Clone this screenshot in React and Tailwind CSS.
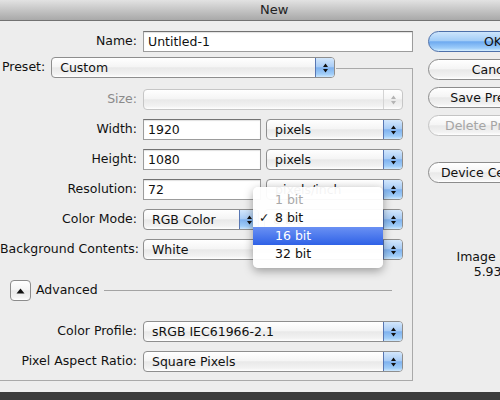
import React from "react";

// aqua control faces
const face =
  "bg-[linear-gradient(#ffffff,#f5f5f5_45%,#e9e9e9_52%,#f2f2f2_85%,#ffffff)]";
const blue =
  "bg-[linear-gradient(#d3e7fc,#aacdf6_45%,#7fb2ef_52%,#a0cdf8_85%,#cfe8fe)]";
const okBlue =
  "bg-[linear-gradient(#cde5fc,#a3cdf7_45%,#6eaaf0_52%,#9dcdfa_85%,#d6eeff)]";

function Arrows({ color = "#111" }) {
  return (
    <svg width="7" height="12" viewBox="0 0 7 12">
      <path d="M3.5 1.5 L6 5 L1 5 Z M1 7 L6 7 L3.5 10.5 Z" fill={color} />
    </svg>
  );
}

function Popup({ value, w, disabled }) {
  return (
    <div
      className={`flex h-[21px] ${w} shrink-0 overflow-hidden rounded-[4px] border ${
        disabled ? "border-[#c6c6c6]" : "border-[#8e8e8e]"
      } ${face}`}
    >
      <span className="flex-1 truncate pl-[8px] leading-[19px]">{value}</span>
      <span
        className={`flex w-[19px] items-center justify-center border-l ${
          disabled ? "border-[#d4d4d4]" : `border-[#5877b3] ${blue}`
        }`}
      >
        <Arrows color={disabled ? "#b4b4b4" : "#111"} />
      </span>
    </div>
  );
}

function Field({ value, w }) {
  return (
    <div
      className={`h-[21px] ${w} shrink-0 border border-[#9c9c9c] border-t-[#727272] bg-white pl-[4px] leading-[19px] shadow-[inset_0_1px_1px_rgba(0,0,0,0.12)]`}
    >
      {value}
    </div>
  );
}

function Row({ label, disabled, children }) {
  return (
    <div className="flex h-[21px] items-center">
      <span
        className={`w-[137px] shrink-0 whitespace-nowrap text-right ${
          disabled ? "text-[#8a8a8a]" : ""
        }`}
      >
        {label}
      </span>
      <div className="ml-[6px] flex gap-[5px]">{children}</div>
    </div>
  );
}

function AquaButton({ label, primary, disabled }) {
  const look = primary
    ? `border-[#4d70aa] ${okBlue}`
    : disabled
    ? `border-[#c4c4c4] text-[#a5a5a5] ${face}`
    : `border-[#8c8c8c] ${face}`;
  return (
    <div
      className={`h-[21px] w-[130px] shrink-0 whitespace-nowrap rounded-full border text-center leading-[19px] ${look}`}
    >
      {label}
    </div>
  );
}

const bits = [
  { label: "1 bit", disabled: true },
  { label: "8 bit", checked: true },
  { label: "16 bit", active: true },
  { label: "32 bit" },
];

export default function App() {
  return (
    <div className="relative flex h-[400px] w-[500px] flex-col overflow-hidden bg-[#ededed] font-['DejaVu_Sans',sans-serif] text-[12.5px] text-[#111]">
      {/* title bar */}
      <div className="h-[21px] shrink-0 border-b border-[#727272] bg-linear-to-b from-[#e2e2e2] to-[#a9a9a9] pl-[260px] text-[13px] leading-[20px] text-[#222]">
        New
      </div>

      {/* body */}
      <div className="flex flex-1 pt-[10px]">
        {/* left side */}
        <div className="w-[413px] shrink-0">
          <Row label="Name:">
            <Field value="Untitled-1" w="w-[270px]" />
          </Row>

          <div className="relative z-10 mt-[5px] flex w-fit items-center bg-[#ededed] pr-[1px]">
            <span className="pl-[2px]">Preset:</span>
            <div className="ml-[6px]">
              <Popup value="Custom" w="w-[284px]" />
            </div>
          </div>

          <div className="-mt-[10px] border-y border-r border-[#a9a9a9] pb-[8px] pt-[20px]">
            <div className="flex flex-col gap-[9px]">
              <Row label="Size:" disabled>
                <Popup value="" w="w-[260px]" disabled />
              </Row>
              <Row label="Width:">
                <Field value="1920" w="w-[118px]" />
                <Popup value="pixels" w="w-[137px]" />
              </Row>
              <Row label="Height:">
                <Field value="1080" w="w-[118px]" />
                <Popup value="pixels" w="w-[137px]" />
              </Row>
              <Row label="Resolution:">
                <Field value="72" w="w-[118px]" />
                <Popup value="pixels/inch" w="w-[137px]" />
              </Row>
              <Row label="Color Mode:">
                <Popup value="RGB Color" w="w-[116px]" />
                <Popup value="8 bit" w="w-[139px]" />
              </Row>
              <Row label="Background Contents:">
                <Popup value="White" w="w-[260px]" />
              </Row>
            </div>

            <div className="mt-[20px] flex h-[21px] items-center pl-[10px] pr-[20px]">
              <div
                className={`flex h-[21px] w-[21px] items-center justify-center rounded-[4px] border border-[#8c8c8c] ${face}`}
              >
                <svg width="9" height="6" viewBox="0 0 9 6">
                  <path d="M4.5 0.5 L8.5 5.5 L0.5 5.5 Z" fill="#111" />
                </svg>
              </div>
              <span className="ml-[5px]">Advanced</span>
              <div className="ml-[6px] h-px flex-1 bg-[#a3a3a3]" />
            </div>

            <div className="mt-[20px] flex flex-col gap-[9px]">
              <Row label="Color Profile:">
                <Popup value="sRGB IEC61966-2.1" w="w-[260px]" />
              </Row>
              <Row label="Pixel Aspect Ratio:">
                <Popup value="Square Pixels" w="w-[260px]" />
              </Row>
            </div>
          </div>
        </div>

        {/* right side */}
        <div className="ml-[15px] flex w-[130px] shrink-0 flex-col">
          <div className="flex flex-col gap-[7px]">
            <AquaButton label="OK" primary />
            <AquaButton label="Cancel" />
            <AquaButton label="Save Preset..." />
            <AquaButton label="Delete Preset..." disabled />
          </div>
          <div className="mt-[26px]">
            <AquaButton label="Device Central..." />
          </div>
          <div className="mt-[66px] text-center leading-[15px]">
            <div>Image Size:</div>
            <div>5.93M</div>
          </div>
        </div>
      </div>

      {/* dark strip below the sheet */}
      <div className="h-[8px] shrink-0 bg-[#3b3b3b]" />

      {/* open bit-depth menu */}
      <div className="absolute left-[253px] top-[187px] w-[130px] rounded-[5px] bg-white/95 pb-[5px] pt-[4px] shadow-[0_3px_10px_rgba(0,0,0,0.35)]">
        {bits.map((b) => (
          <div
            key={b.label}
            className={`flex h-[18px] items-center ${
              b.active
                ? "bg-linear-to-b from-[#6a90f3] to-[#2f61e6] text-white"
                : b.disabled
                ? "text-[#a8a8a8]"
                : ""
            }`}
          >
            <span className="w-[22px] pl-[6px]">{b.checked ? "✓" : ""}</span>
            <span>{b.label}</span>
          </div>
        ))}
      </div>
    </div>
  );
}
